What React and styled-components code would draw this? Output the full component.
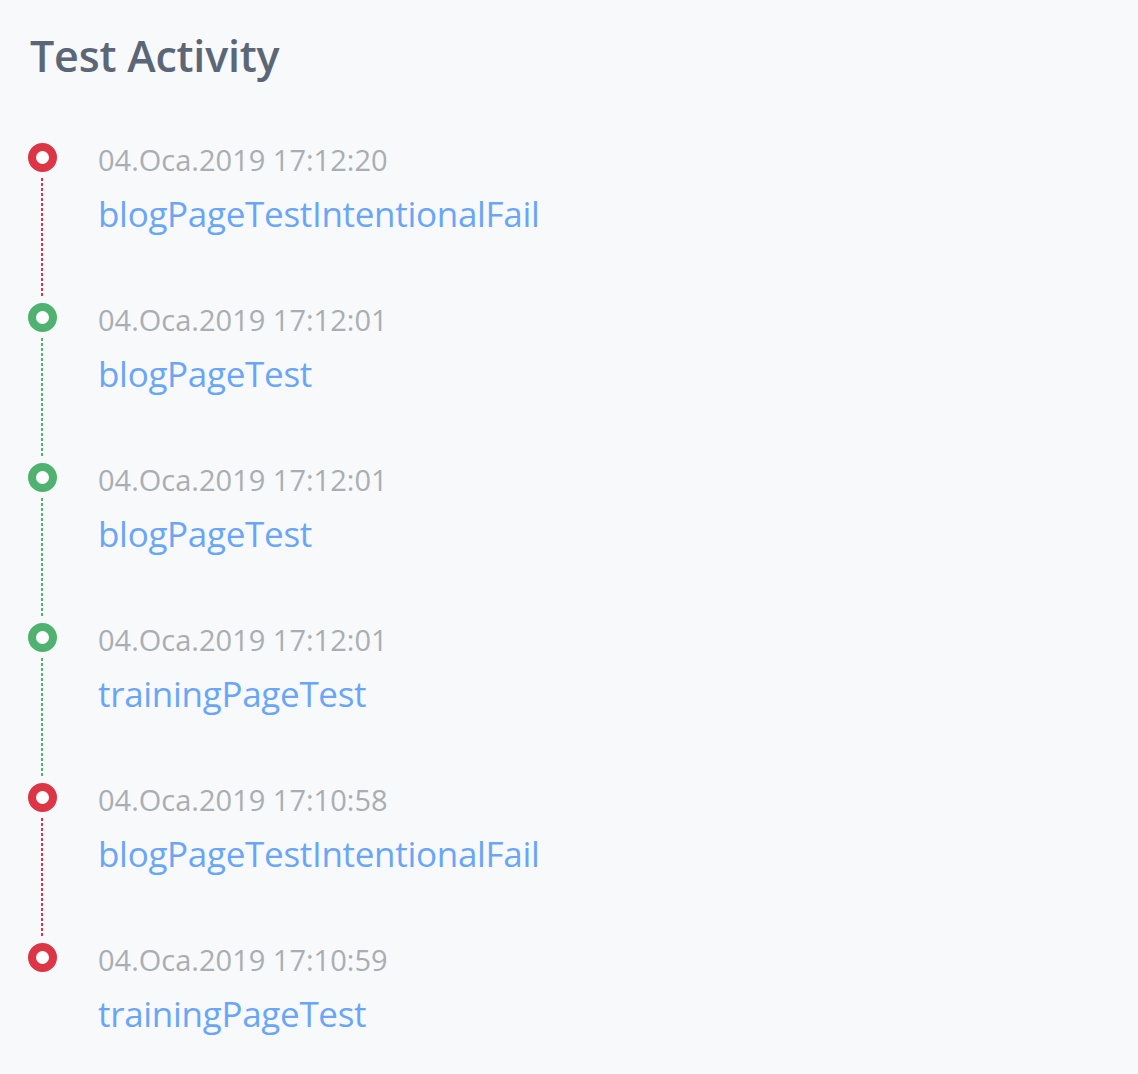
import React from "react";
import styled, { createGlobalStyle } from "styled-components";

const GlobalStyle = createGlobalStyle`
  html, body {
    margin: 0;
    padding: 0;
    background: #f8f9fb;
  }
  body {
    font-family: "Open Sans", "Noto Sans", sans-serif;
  }
`;

const STATUS_COLORS = {
  fail: "#dc3545",
  pass: "#4fb270",
};

const activities = [
  { date: "04.Oca.2019 17:12:20", name: "blogPageTestIntentionalFail", status: "fail" },
  { date: "04.Oca.2019 17:12:01", name: "blogPageTest", status: "pass" },
  { date: "04.Oca.2019 17:12:01", name: "blogPageTest", status: "pass" },
  { date: "04.Oca.2019 17:12:01", name: "trainingPageTest", status: "pass" },
  { date: "04.Oca.2019 17:10:58", name: "blogPageTestIntentionalFail", status: "fail" },
  { date: "04.Oca.2019 17:10:59", name: "trainingPageTest", status: "fail" },
];

const Page = styled.div`
  min-height: 1074px;
  box-sizing: border-box;
  padding: 24px 28px 0;
  background: #f8f9fb;
`;

const Title = styled.h2`
  margin: 0 0 0 2px;
  font-size: 43px;
  font-weight: 600;
  line-height: 64px;
  color: #5b6676;
  letter-spacing: -0.2px;
`;

const Timeline = styled.ul`
  list-style: none;
  margin: 55px 0 0;
  padding: 0;
`;

const Item = styled.li`
  display: flex;
  height: 160px;
`;

const Marker = styled.div`
  width: 29px;
  display: flex;
  flex-direction: column;
  align-items: center;
  flex-shrink: 0;
`;

const Dot = styled.span`
  width: 29px;
  height: 29px;
  box-sizing: border-box;
  border-radius: 50%;
  border: 8.5px solid ${(p) => p.$color};
  background: #ffffff;
  flex-shrink: 0;
`;

const Line = styled.span`
  flex: 1;
  width: 2px;
  margin: 6px 2px 5px 0;
  background: repeating-linear-gradient(
    to bottom,
    ${(p) => p.$color} 0 3px,
    transparent 3px 5px
  );
`;

const Content = styled.div`
  margin-left: 41px;
  display: flex;
  flex-direction: column;
`;

const DateText = styled.span`
  font-size: 29px;
  line-height: 34px;
  color: #a9aeb3;
  letter-spacing: 0;
`;

const Name = styled.a`
  margin-top: 16px;
  font-size: 35px;
  line-height: 42px;
  color: #6aa6f8;
  text-decoration: none;
  letter-spacing: -0.3px;
`;

export default function App() {
  return (
    <>
      <GlobalStyle />
      <Page>
        <Title>Test Activity</Title>
        <Timeline>
          {activities.map((a, i) => {
            const color = STATUS_COLORS[a.status];
            return (
              <Item key={i}>
                <Marker>
                  <Dot $color={color} />
                  {i < activities.length - 1 && <Line $color={color} />}
                </Marker>
                <Content>
                  <DateText>{a.date}</DateText>
                  <Name href="#">{a.name}</Name>
                </Content>
              </Item>
            );
          })}
        </Timeline>
      </Page>
    </>
  );
}
